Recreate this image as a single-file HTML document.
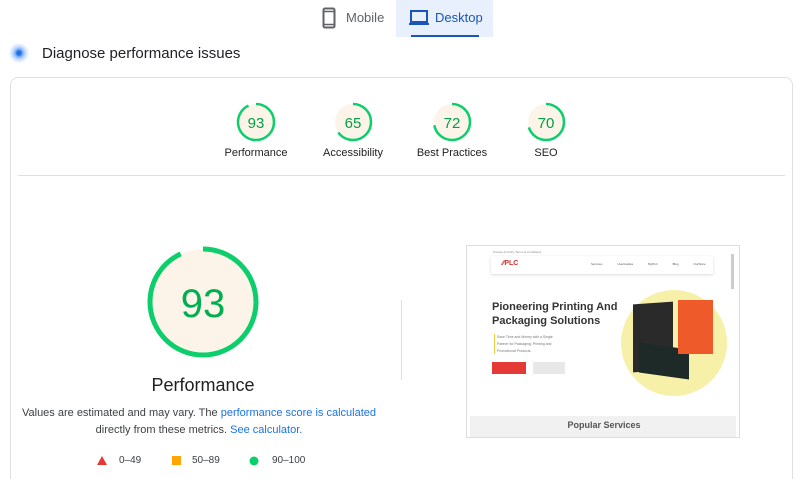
<!DOCTYPE html>
<html><head><meta charset="utf-8"><style>
*{margin:0;padding:0;box-sizing:border-box}
html,body{width:796px;height:479px;overflow:hidden}
body{background:#fff;font-family:"Liberation Sans",Arial,sans-serif;position:relative;color:#202124}
.a{position:absolute}
.lbl{position:absolute;font-size:11px;color:#212121;text-align:center;width:100px}
.g text{font-family:"Liberation Sans",Arial,sans-serif}
</style></head><body>
<div class="a" style="left:396px;top:0;width:97px;height:37px;background:#e8f0fe"></div>
<div class="a" style="left:411px;top:35px;width:68px;height:2px;background:#1a56b8"></div>
<svg class="a" style="left:322px;top:7px" width="14" height="22" viewBox="0 0 14 22"><rect x="1.5" y="1.5" width="11" height="19" rx="1.5" fill="none" stroke="#5f6368" stroke-width="2"/><line x1="2" y1="4.5" x2="12" y2="4.5" stroke="#5f6368" stroke-width="1.5"/><line x1="2" y1="17.5" x2="12" y2="17.5" stroke="#5f6368" stroke-width="1.5"/></svg>
<div class="a" style="left:346px;top:10px;font-size:13px;color:#5f6368">Mobile</div>
<svg class="a" style="left:409px;top:10px" width="20" height="16" viewBox="0 0 20 16"><rect x="2" y="1" width="16" height="11" fill="none" stroke="#1a56b8" stroke-width="2"/><rect x="0" y="13" width="20" height="2" fill="#1a56b8"/></svg>
<div class="a" style="left:435px;top:10px;font-size:13px;color:#1a56b8">Desktop</div>
<div class="a" style="left:9px;top:43px;width:20px;height:20px;border-radius:50%;background:radial-gradient(circle,#1a73e8 0 2px,#8ab4f8 4px,#d2e3fc 7px,rgba(232,240,254,0.3) 10px)"></div>
<div class="a" style="left:42px;top:45px;font-size:15px;color:#202124">Diagnose performance issues</div>
<div class="a" style="left:10px;top:77px;width:783px;height:420px;border:1px solid #e0e0e0;border-radius:8px"></div>
<div class="a" style="left:18px;top:175px;width:767px;height:1px;background:#e0e0e0"></div>
<svg class="a g" style="left:0;top:0" width="796" height="479">
<g font-size="15" text-anchor="middle">
<circle cx="256" cy="122" r="18" fill="#fdf4e9"/><circle cx="256" cy="122" r="18" fill="none" stroke="#0cce6b" stroke-width="2.5" stroke-dasharray="105.2 200" transform="rotate(-90 256 122)"/><text x="256" y="128" fill="#00a045">93</text>
<circle cx="353" cy="122" r="18" fill="#fdf4e9"/><circle cx="353" cy="122" r="18" fill="none" stroke="#0cce6b" stroke-width="2.5" stroke-dasharray="73.5 200" transform="rotate(-90 353 122)"/><text x="353" y="128" fill="#00a045">65</text>
<circle cx="452" cy="122" r="18" fill="#fdf4e9"/><circle cx="452" cy="122" r="18" fill="none" stroke="#0cce6b" stroke-width="2.5" stroke-dasharray="81.4 200" transform="rotate(-90 452 122)"/><text x="452" y="128" fill="#00a045">72</text>
<circle cx="546" cy="122" r="18" fill="#fdf4e9"/><circle cx="546" cy="122" r="18" fill="none" stroke="#0cce6b" stroke-width="2.5" stroke-dasharray="79.2 200" transform="rotate(-90 546 122)"/><text x="546" y="128" fill="#00a045">70</text>
</g>
<circle cx="203" cy="302" r="53" fill="#fdf4e9"/><circle cx="203" cy="302" r="53" fill="none" stroke="#0cce6b" stroke-width="5" stroke-dasharray="309.7 400" transform="rotate(-90 203 302)"/>
<text x="203" y="317" font-size="40" text-anchor="middle" fill="#00b050">93</text>
<polygon points="102,456 107,465 97,465" fill="#e53935"/>
<rect x="172" y="456" width="9" height="9" fill="#ffa400"/>
<circle cx="254" cy="461" r="4.5" fill="#0cce6b"/>
</svg>
<div class="lbl" style="left:206px;top:147px">Performance</div>
<div class="lbl" style="left:303px;top:147px">Accessibility</div>
<div class="lbl" style="left:402px;top:147px">Best Practices</div>
<div class="lbl" style="left:496px;top:147px">SEO</div>
<div class="a" style="left:103px;top:375px;width:200px;text-align:center;font-size:18px;color:#212121">Performance</div>
<div class="a" style="left:20px;top:405px;width:358px;text-align:center;font-size:11px;line-height:17px;color:#3c4043">Values are estimated and may vary. The <span style="color:#1a73e8">performance score is calculated</span><br>directly from these metrics. <span style="color:#1a73e8">See calculator.</span></div>
<div class="a" style="left:119px;top:455px;font-size:10px;color:#3c4043">0–49</div>
<div class="a" style="left:192px;top:455px;font-size:10px;color:#3c4043">50–89</div>
<div class="a" style="left:272px;top:455px;font-size:10px;color:#3c4043">90–100</div>
<div class="a" style="left:401px;top:300px;width:1px;height:80px;background:#e0e0e0"></div>
<div class="a" style="left:466px;top:245px;width:274px;height:193px;border:1px solid #ddd;background:#fff;overflow:hidden">
 <div class="a" style="left:26px;top:4px;font-size:3px;color:#888">Privacy &amp; Policy   Terms &amp; Conditions</div>
 <div class="a" style="left:24px;top:10px;width:222px;height:18px;background:#fff;box-shadow:0 1px 3px rgba(0,0,0,.15)"></div>
 <div class="a" style="left:35px;top:14px;font-size:7px;font-weight:bold;color:#d32f2f">∕∕PLC</div>
 <div class="a" style="left:124px;top:16px;font-size:3px;color:#555;word-spacing:14px">Services UserGuides MyPLC Blog OurStore</div>
 <div class="a" style="left:264px;top:8px;width:3px;height:35px;background:#ccc"></div>
 <div class="a" style="left:25px;top:54px;font-size:11px;font-weight:bold;line-height:14px;color:#333">Pioneering Printing And<br>Packaging Solutions</div>
 <div class="a" style="left:27px;top:88px;width:1px;height:20px;background:#f5c842"></div>
 <div class="a" style="left:30px;top:88px;font-size:3.5px;line-height:7px;color:#777">Save Time and Money with a Single<br>Partner for Packaging, Printing and<br>Promotional Products</div>
 <div class="a" style="left:25px;top:116px;width:34px;height:12px;background:#e53935"></div>
 <div class="a" style="left:66px;top:116px;width:32px;height:12px;background:#e8e8e8"></div>
 <div class="a" style="left:154px;top:44px;width:106px;height:106px;border-radius:50%;background:#f6f0a8"></div>
 <div class="a" style="left:166px;top:57px;width:40px;height:68px;background:#2a2a2a;transform:skewY(-4deg)"></div>
 <div class="a" style="left:172px;top:100px;width:50px;height:30px;background:#1e2a28;transform:skewY(8deg)"></div>
 <div class="a" style="left:211px;top:54px;width:35px;height:54px;background:#ef5a2a"></div>
 <div class="a" style="left:3px;top:170px;width:266px;height:22px;background:#f1f1f1"></div>
 <div class="a" style="left:0;top:174px;width:274px;text-align:center;font-size:9px;font-weight:bold;color:#555">Popular Services</div>
</div>
</body></html>
